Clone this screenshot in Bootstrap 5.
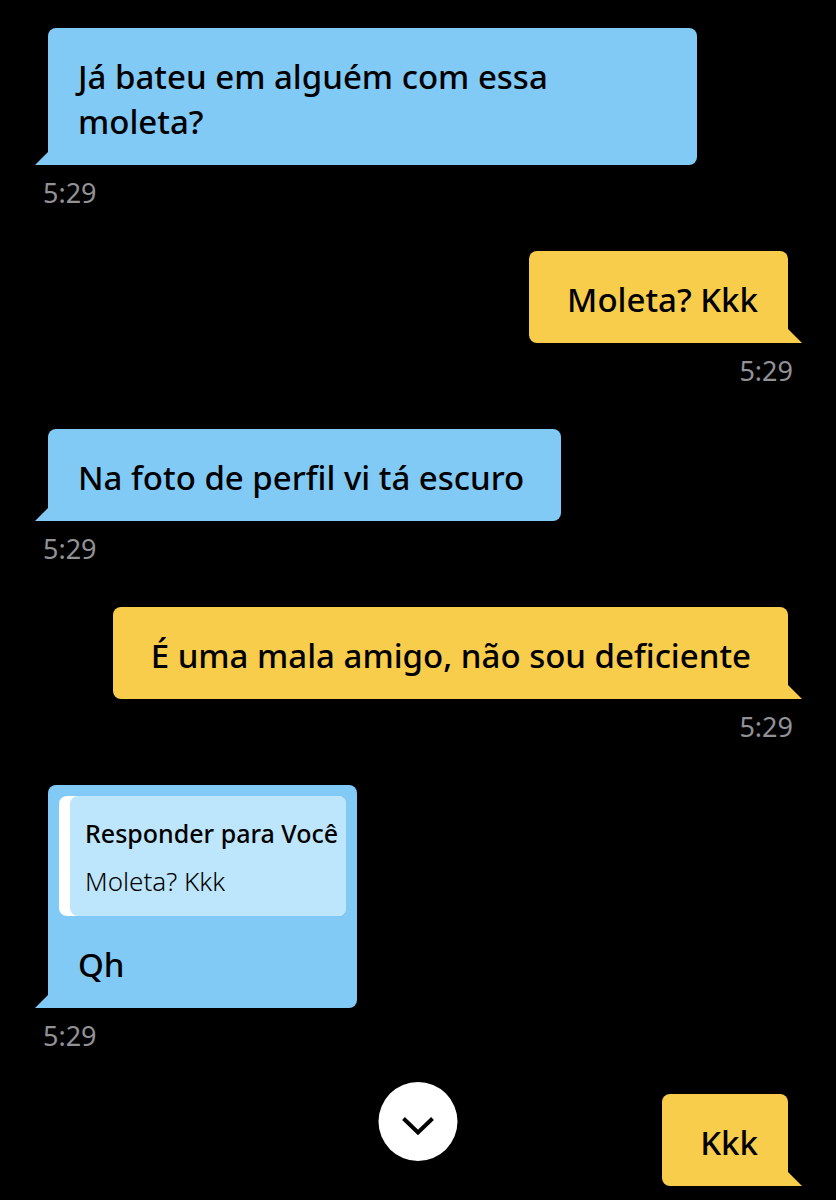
<!DOCTYPE html>
<html lang="pt-BR">
<head>
<meta charset="utf-8">
<meta name="viewport" content="width=device-width, initial-scale=1">
<title>Conversa</title>
<link href="https://cdn.jsdelivr.net/npm/bootstrap@5.3.0/dist/css/bootstrap.min.css" rel="stylesheet">
<style>
  body { background: #000; color: #000; font-family: "Noto Sans", "Open Sans", sans-serif; }
  .chat { padding: 28px 48px 14px; }
  .message { margin-bottom: 40px; }
  .message:last-child { margin-bottom: 0; }
  .bubble { position: relative; max-width: 649px; border-radius: 8px; font-size: 33px; line-height: 45px; font-weight: 500; }
  .bubble-text { padding: 26px 30px 21px; }
  .bubble::after { content: ""; position: absolute; bottom: 0; width: 22px; height: 22px; background: inherit; }
  .received .bubble { background: #81caf6; border-bottom-left-radius: 0; }
  .received .bubble::after { left: -13px; clip-path: polygon(100% 0, 100% 100%, 0 100%); }
  .sent .bubble { max-width: 680px; background: #f7cd4b; border-bottom-right-radius: 0; }
  .sent .bubble::after { right: -14px; clip-path: polygon(0 0, 0 100%, 100% 100%); }
  .sent .bubble-text { padding-left: 38px; }
  .bubble-wide .bubble-text { padding-right: 37px; }
  .stamp { margin: 10px -5px 0; color: #919196; font-size: 27px; line-height: 36px; font-weight: 400; }
  .quote { margin: 11px 11px 0; padding-left: 11px; background: #fff; border-radius: 8px; line-height: 48px; }
  .quote-body { background: #bde5fb; border-radius: 8px; padding: 13px 8px 11px 15px; }
  .quote-name { font-size: 25px; font-weight: 500; }
  .quote-text { font-size: 26px; font-weight: 300; }
  .scroll-down { bottom: 39px; width: 79px; height: 79px; background: #fff; }
</style>
</head>
<body>
<main class="chat d-flex flex-column">
  <article class="message received d-flex flex-column align-items-start">
    <div class="bubble"><p class="bubble-text mb-0">Já bateu em alguém com essa moleta?</p></div>
    <time class="stamp" datetime="05:29">5:29</time>
  </article>
  <article class="message sent d-flex flex-column align-items-end">
    <div class="bubble"><p class="bubble-text mb-0">Moleta? Kkk</p></div>
    <time class="stamp" datetime="05:29">5:29</time>
  </article>
  <article class="message received d-flex flex-column align-items-start">
    <div class="bubble bubble-wide"><p class="bubble-text mb-0">Na foto de perfil vi tá escuro</p></div>
    <time class="stamp" datetime="05:29">5:29</time>
  </article>
  <article class="message sent d-flex flex-column align-items-end">
    <div class="bubble bubble-wide"><p class="bubble-text mb-0">É uma mala amigo, não sou deficiente</p></div>
    <time class="stamp" datetime="05:29">5:29</time>
  </article>
  <article class="message received d-flex flex-column align-items-start">
    <div class="bubble">
      <div class="quote">
        <div class="quote-body">
          <div class="quote-name">Responder para Você</div>
          <div class="quote-text">Moleta? Kkk</div>
        </div>
      </div>
      <p class="bubble-text mb-0">Qh</p>
    </div>
    <time class="stamp" datetime="05:29">5:29</time>
  </article>
  <article class="message sent d-flex flex-column align-items-end">
    <div class="bubble"><p class="bubble-text mb-0">Kkk</p></div>
  </article>
</main>
<button type="button" class="scroll-down position-fixed start-50 translate-middle-x border-0 rounded-circle p-0 d-flex align-items-center justify-content-center" aria-label="Ir para o fim">
  <svg width="79" height="79" viewBox="0 0 79 79" fill="none" stroke="#000" stroke-width="4" aria-hidden="true"><path d="M25 36.500 39.500 50.500 54 36.500"/></svg>
</button>
<script src="https://cdn.jsdelivr.net/npm/bootstrap@5.3.0/dist/js/bootstrap.bundle.min.js"></script>
</body>
</html>
